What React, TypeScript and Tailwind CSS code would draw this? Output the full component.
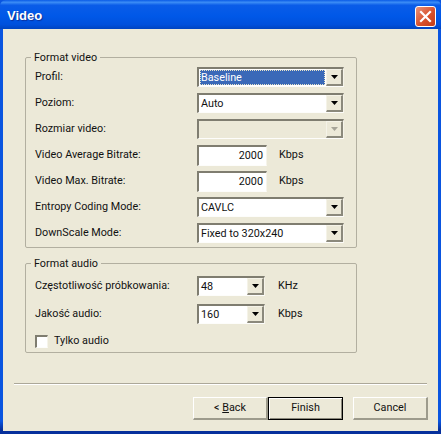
import React from "react";

const sunken = "border-t-2 border-l-2 border-t-[#7f7d70] border-l-[#7f7d70] border-r border-b border-r-[#f6f4ea] border-b-[#fdfdfb]";

function Arrow({ disabled }: { disabled?: boolean }) {
  return (
    <div className="w-[17px] h-full bg-[#ece9d8] border-r-2 border-b-2 border-r-[#8b897c] border-b-[#8b897c] border-t border-l border-t-[#f5f3e8] border-l-[#f5f3e8] flex items-center justify-center">
      <svg width="7" height="4" viewBox="0 0 7 4">
        <path d="M0 0H7L3.5 4Z" fill={disabled ? "#a6a498" : "#000"} />
      </svg>
    </div>
  );
}

function Combo({ value, w, selected, disabled }: { value?: string; w: string; selected?: boolean; disabled?: boolean }) {
  return (
    <div className={`${w} h-[20px] flex ${sunken} ${disabled ? "bg-[#ece9d8]" : "bg-white"}`}>
      <div className="flex-1 min-w-0 p-px flex">
        {selected ? (
          <div className="flex-1 bg-[#3a69b8] text-white border border-dotted border-[#e8e4c8] leading-[14px]">{value}</div>
        ) : (
          <div className="flex-1 pl-px leading-[16px]">{value}</div>
        )}
      </div>
      <Arrow disabled={disabled} />
    </div>
  );
}

function Edit({ value }: { value: string }) {
  return (
    <div className={`w-[70px] h-[21px] bg-white ${sunken} text-right pr-[3px] leading-[17px]`}>{value}</div>
  );
}

function Row({ label, h = "h-[26px]", children }: { label: string; h?: string; children: React.ReactNode }) {
  return (
    <div className={`${h} flex items-center`}>
      <div className="w-[162px]">{label}</div>
      {children}
    </div>
  );
}

function Unit({ children, ml = "ml-[13px]" }: { children: string; ml?: string }) {
  return <div className={ml}>{children}</div>;
}

function Group({ title, className, children }: { title: string; className: string; children: React.ReactNode }) {
  return (
    <fieldset className={`w-[332px] border border-[#b2afa0] rounded-[2px] px-[9px] ${className}`}>
      <legend className="ml-[-4px] px-[3px] h-[13px] leading-[13px]">{title}</legend>
      {children}
    </fieldset>
  );
}

export default function App() {
  return (
    <div
      className="w-[441px] h-[434px] overflow-hidden flex flex-col bg-[linear-gradient(180deg,#0a55e0_97%,#06309c_99%)] text-[10.8px] text-[#111]"
      style={{ fontFamily: 'Roboto, "Liberation Sans", Arial, sans-serif' }}
    >
      <div className="h-[29px] shrink-0 flex items-center justify-between pt-[3px] pl-[7px] pr-[5px] rounded-t-[6px] bg-[linear-gradient(180deg,#0a5be6_0%,#3b8cf5_8%,#0a5ce8_18%,#0058e8_55%,#0050dc_85%,#0044c0_100%)]">
        <span
          className="text-white font-bold text-[13px]"
          style={{ fontFamily: '"Liberation Sans", Arial, sans-serif', textShadow: "1px 1px 1px #0a2f9a" }}
        >
          Video
        </span>
        <div className="w-[21px] h-[21px] rounded-[3px] border border-white bg-[linear-gradient(135deg,#e8937a,#d9512c_55%,#c23c17)] flex items-center justify-center">
          <svg width="13" height="13" viewBox="0 0 13 13">
            <path d="M2 2L11 11M11 2L2 11" stroke="#fff" strokeWidth="2.2" strokeLinecap="square" />
          </svg>
        </div>
      </div>

      <div className="flex-1 min-h-0 mx-[3px] mb-[3px] bg-[#ece9d8] flex flex-col">
        <div className="pl-[22px] pt-[22px]">
          <Group title="Format video" className="h-[197px]">
            <Row label="Profil:"><Combo w="w-[147px]" value="Baseline" selected /></Row>
            <Row label="Poziom:"><Combo w="w-[147px]" value="Auto" /></Row>
            <Row label="Rozmiar video:"><Combo w="w-[147px]" disabled /></Row>
            <Row label="Video Average Bitrate:"><Edit value="2000" /><Unit ml="ml-[12px]">Kbps</Unit></Row>
            <Row label="Video Max. Bitrate:"><Edit value="2000" /><Unit ml="ml-[12px]">Kbps</Unit></Row>
            <Row label="Entropy Coding Mode:"><Combo w="w-[147px]" value="CAVLC" /></Row>
            <Row label="DownScale Mode:"><Combo w="w-[147px]" value="Fixed to 320x240" /></Row>
          </Group>
          <Group title="Format audio" className="h-[96px] mt-[9px] pt-[2px]">
            <Row label="Częstotliwość próbkowania:" h="h-[28px]"><Combo w="w-[68px]" value="48" /><Unit>KHz</Unit></Row>
            <Row label="Jakość audio:" h="h-[28px]"><Combo w="w-[68px]" value="160" /><Unit>Kbps</Unit></Row>
            <div className="h-[26px] flex items-center">
              <div className={`w-[13px] h-[13px] bg-white ${sunken}`} />
              <span className="ml-[6px]">Tylko audio</span>
            </div>
          </Group>
        </div>

        <div className="mt-auto mx-[11px] h-[2px] border-t border-t-[#aca899] border-b border-b-white" />
        <div className="h-[46px] flex items-start justify-end pt-[12px] pr-[10px]">
          <button className="w-[75px] h-[23px] bg-[#ece9d8] border-t border-l border-t-white border-l-white border-r-2 border-b-2 border-r-[#9d9b8c] border-b-[#9d9b8c] text-center">
            &lt; <span className="underline">B</span>ack
          </button>
          <button className="w-[75px] h-[23px] bg-[#ece9d8] border border-black shadow-[inset_1px_1px_0_#fff,inset_-1px_-1px_0_#8b897c] text-center">
            Finish
          </button>
          <button className="ml-[10px] w-[75px] h-[23px] bg-[#ece9d8] border-t border-l border-t-white border-l-white border-r-2 border-b-2 border-r-[#9d9b8c] border-b-[#9d9b8c] text-center">
            Cancel
          </button>
        </div>
      </div>
    </div>
  );
}
